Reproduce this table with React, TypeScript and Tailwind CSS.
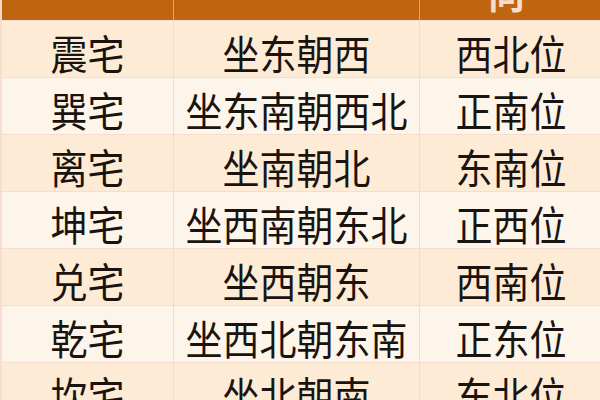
import React from "react";

const rows = [
  ["震宅", "坐东朝西", "西北位"],
  ["巽宅", "坐东南朝西北", "正南位"],
  ["离宅", "坐南朝北", "东南位"],
  ["坤宅", "坐西南朝东北", "正西位"],
  ["兑宅", "坐西朝东", "西南位"],
  ["乾宅", "坐西北朝东南", "正东位"],
  ["坎宅", "坐北朝南", "东北位"],
];

const App = () => {
  return (
    <div
      className="w-[600px] h-[400px] overflow-hidden bg-[#fdf1e4] text-[#1a1410]"
      style={{ fontFamily: '"Noto Sans CJK SC", "Noto Sans", sans-serif' }}
    >
      <div className="grid grid-cols-[172px_246px_182px] h-[20px] bg-[#c0650f] border-l-2 border-[#f6d9cc] overflow-hidden">
        <div className="border-r border-[#e3a46a]" />
        <div className="border-r border-[#e3a46a]" />
        <div className="relative">
          <span className="absolute left-[68px] bottom-[8px] text-[37px] font-bold leading-none text-[#f5dccb]">
            向
          </span>
        </div>
      </div>
      {rows.map((r, i) => (
        <div
          key={r[0]}
          className={`grid grid-cols-[172px_246px_182px] h-[57px] border-t border-l-2 border-[#f6ddd0] ${
            i % 2 === 0 ? "bg-[#fdebd6]" : "bg-[#fef5ea]"
          }`}
        >
          {r.map((c, j) => (
            <div
              key={j}
              className={`flex items-center justify-center pt-[6px] text-[37px] font-normal leading-none ${
                j < 2 ? "border-r border-[#f1dccb]" : ""
              }`}
            >
              <span className="inline-block scale-y-[1.1]">{c}</span>
            </div>
          ))}
        </div>
      ))}
    </div>
  );
};

export default App;
